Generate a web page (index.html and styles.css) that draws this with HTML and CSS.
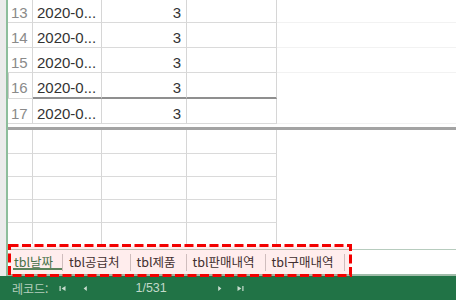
FILE: index.html
```html
<!DOCTYPE html>
<html lang="ko">
<head>
<meta charset="utf-8">
<link rel="stylesheet" href="styles.css">
</head>
<body>
<div class="app">
  <div class="main">
    <div class="edge"></div>
    <div class="content">
      <div class="rows">
        <div class="row"><div class="c num">13</div><div class="c date">2020-0...</div><div class="c val">3</div><div class="c d"></div><div class="c rest"></div></div>
        <div class="row"><div class="c num">14</div><div class="c date">2020-0...</div><div class="c val">3</div><div class="c d"></div><div class="c rest"></div></div>
        <div class="row"><div class="c num">15</div><div class="c date">2020-0...</div><div class="c val">3</div><div class="c d"></div><div class="c rest"></div></div>
        <div class="row sep"><div class="c num">16</div><div class="c date">2020-0...</div><div class="c val">3</div><div class="c d"></div><div class="c rest"></div></div>
        <div class="row"><div class="c num">17</div><div class="c date">2020-0...</div><div class="c val">3</div><div class="c d"></div><div class="c rest"></div></div>
      </div>
      <div class="divider"></div>
      <div class="lower">
        <div class="lrow lrow-top"><div></div><div></div><div></div><div></div></div>
        <div class="lrow"><div></div><div></div><div></div><div></div></div>
        <div class="lrow"><div></div><div></div><div></div><div></div></div>
        <div class="lrow"><div></div><div></div><div></div><div></div></div>
        <div class="lrow lrow-fill"><div></div><div></div><div></div><div></div></div>
      </div>
      <div class="tabbar">
        <div class="tabstrip">
          <div class="tab active">tbl날짜</div>
          <span class="sep"></span>
          <div class="tab">tbl공급처</div>
          <span class="sep"></span>
          <div class="tab">tbl제품</div>
          <span class="sep"></span>
          <div class="tab">tbl판매내역</div>
          <span class="sep"></span>
          <div class="tab">tbl구매내역</div>
          <span class="sep"></span>
        </div>
      </div>
    </div>
  </div>
  <div class="status">
    <span class="label">레코드:</span>
    <svg class="ico nav-first" width="7" height="7" viewBox="0 0 7 7"><rect x="0.5" y="1" width="1.2" height="5"/><path d="M6.5 1 L2.6 3.5 L6.5 6 Z"/></svg>
    <svg class="ico nav-prev" width="4" height="7" viewBox="0 0 4 7"><path d="M3.8 1 L0.6 3.5 L3.8 6 Z"/></svg>
    <span class="count">1/531</span>
    <svg class="ico nav-next" width="4" height="7" viewBox="0 0 4 7"><path d="M0.2 1 L3.4 3.5 L0.2 6 Z"/></svg>
    <svg class="ico nav-last" width="7" height="7" viewBox="0 0 7 7"><path d="M0.5 1 L4.4 3.5 L0.5 6 Z"/><rect x="5.3" y="1" width="1.2" height="5"/></svg>
  </div>
  <svg class="mark" width="344" height="33" viewBox="0 0 344 33"><rect x="1.5" y="1.5" width="341" height="30" fill="rgba(255,0,0,0.07)" stroke="#f20000" stroke-width="3" stroke-dasharray="9 3.5"/></svg>
</div>
</body>
</html>
```
FILE: styles.css
```css
html, body {
  margin: 0;
  padding: 0;
  background: #ffffff;
}
body {
  width: 456px;
  height: 300px;
  overflow: hidden;
  font-family: "Liberation Sans", "Noto Sans CJK KR", sans-serif;
}
.app {
  position: relative;
  width: 456px;
  height: 300px;
  display: flex;
  flex-direction: column;
  overflow: hidden;
}
.main {
  flex: 1;
  display: flex;
  min-height: 0;
}
.edge {
  width: 6px;
  background: #ebebeb;
  border-right: 2px solid #8dbd9b;
}
.content {
  flex: 1;
  display: flex;
  flex-direction: column;
  min-width: 0;
  overflow: hidden;
}
.rows {
  margin-top: -2px;
}
.row {
  display: grid;
  grid-template-columns: 25px 69px 85px 90px 1fr;
  height: 25px;
}
.row.sep {
  height: 26px;
}
.c {
  box-sizing: border-box;
  border-right: 1px solid #d6d6d6;
  border-bottom: 1px solid #dadada;
  padding-top: 3px;
  line-height: 24px;
  font-size: 15px;
  white-space: nowrap;
  overflow: hidden;
}
.num {
  color: #8a8a8a;
  padding-left: 3px;
}
.date {
  color: #333333;
  padding-left: 4px;
}
.val {
  color: #333333;
  text-align: right;
  padding-right: 5px;
}
.rest {
  border-right: none;
  border-bottom-color: #f2f2f2;
}
.row.sep .date,
.row.sep .val,
.row.sep .d {
  border-bottom: 2px solid #8f8f8f;
}
.divider {
  margin-top: 3px;
  height: 3px;
  background: #a3a3a3;
}
.lower {
  flex: 1;
  display: flex;
  flex-direction: column;
}
.lrow {
  display: grid;
  grid-template-columns: 25px 69px 85px 90px;
  height: 23px;
}
.lrow-top {
  height: 24px;
}
.lrow-fill {
  flex: 1;
}
.lrow > div {
  box-sizing: border-box;
  border-right: 1px solid #d6d6d6;
  border-bottom: 1px solid #dadada;
}
.lrow-fill > div {
  border-bottom: none;
}
.tabbar {
  height: 32px;
  box-sizing: border-box;
  padding-top: 5px;
}
.tabstrip {
  height: 27px;
  box-sizing: border-box;
  border-top: 1px solid #b7ccbe;
  border-bottom: 2px solid #a0bca9;
  display: flex;
  align-items: center;
  font-family: "Noto Sans CJK KR", sans-serif;
  font-size: 12.5px;
  color: #333333;
}
.tab {
  height: 24px;
  line-height: 24px;
  padding: 0 10px 0 6px;
  white-space: nowrap;
}
.tab.active {
  padding-right: 9px;
  color: #3b7b50;
  background: linear-gradient(#4f8f64, #4f8f64) no-repeat 5px 18px / calc(100% - 5px) 2px;
}
.sep {
  width: 1px;
  height: 17px;
  background: #cccccc;
}
.status {
  height: 24px;
  flex: none;
  background: #217346;
  display: flex;
  align-items: center;
  padding-left: 12px;
  color: #b5cfbd;
  font-family: "Noto Sans CJK KR", sans-serif;
  font-size: 12px;
}
.ico {
  fill: #c9ddcf;
}
.nav-first {
  margin-left: 11px;
}
.nav-prev {
  margin-left: 17px;
}
.count {
  margin-left: 48px;
  font-family: "Liberation Sans", sans-serif;
  font-size: 12.5px;
  color: #c2d9c9;
}
.nav-next {
  margin-left: 51px;
}
.nav-last {
  margin-left: 15px;
}
.mark {
  position: absolute;
  left: 8px;
  top: 244px;
}
```
